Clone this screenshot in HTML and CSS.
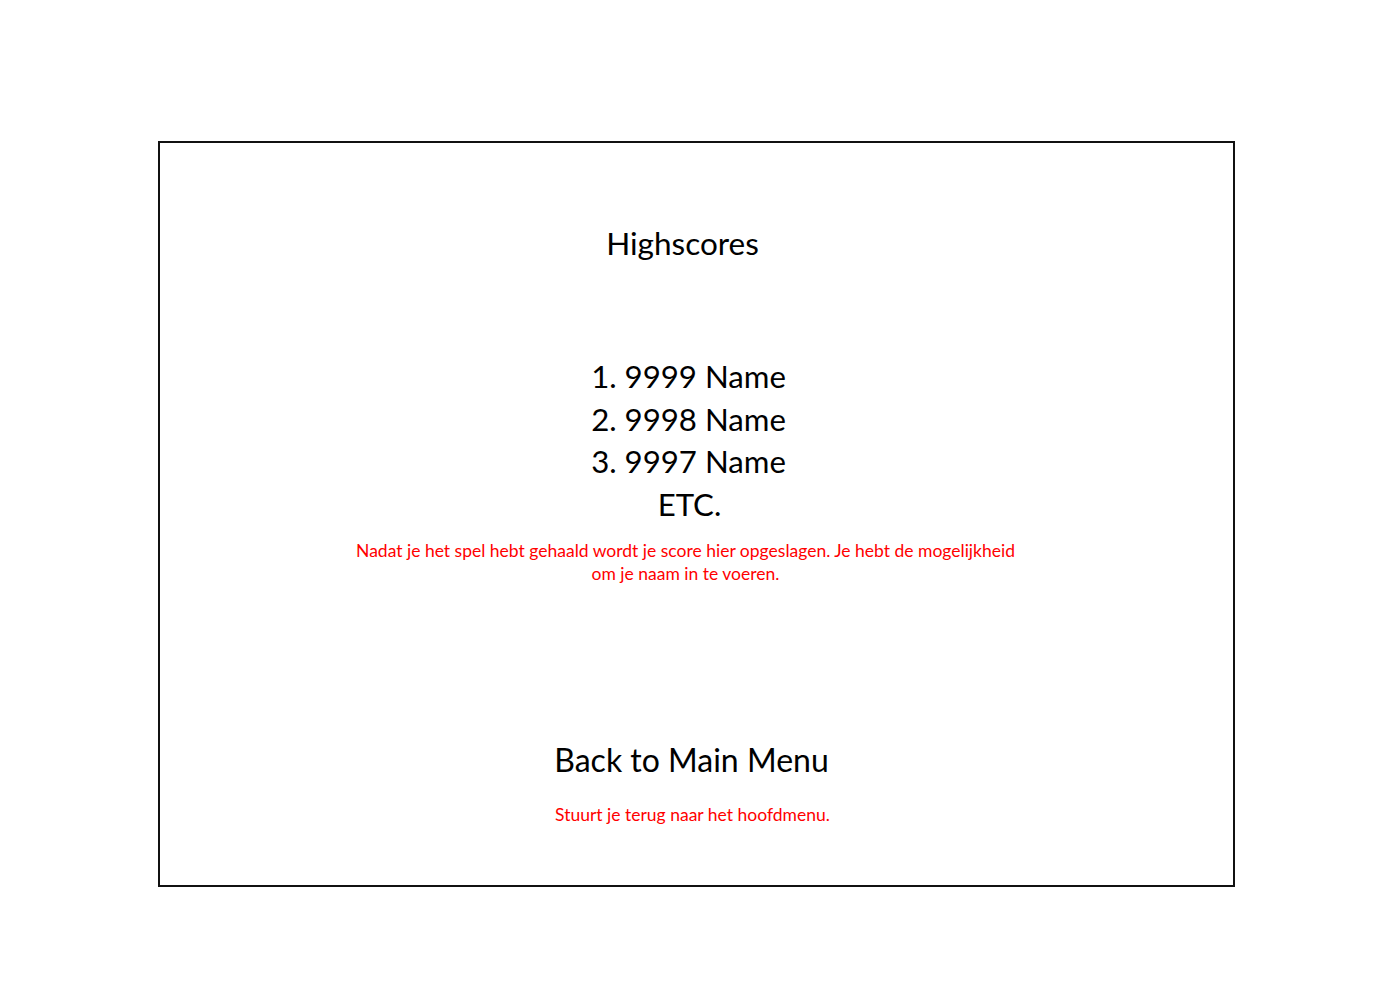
FILE: index.html
```html
<!DOCTYPE html>
<html>
<head>
<meta charset="utf-8">
<link rel="stylesheet" href="styles.css">
</head>
<body>
<div class="frame">
  <h1 class="title">Highscores</h1>
  <ol class="scores">
    <li>1. 9999 Name</li>
    <li>2. 9998 Name</li>
    <li>3. 9997 Name</li>
    <li class="etc">ETC.</li>
  </ol>
  <p class="note note-wide">Nadat je het spel hebt gehaald wordt je score hier opgeslagen. Je hebt de mogelijkheid<br>om je naam in te voeren.</p>
  <div class="back">Back to Main Menu</div>
  <p class="note note-back">Stuurt je terug naar het hoofdmenu.</p>
</div>
</body>
</html>
```

FILE: styles.css
```css
html, body {
  margin: 0;
  padding: 0;
  background: #fff;
}
body {
  font-family: Lato, "Open Sans", "Liberation Sans", sans-serif;
  color: #000;
}
.frame {
  box-sizing: border-box;
  margin: 141px 0 0 158px;
  width: 1077px;
  height: 746px;
  border: 2px solid #111;
  padding: 80px 16px 0 0;
  display: flex;
  flex-direction: column;
  align-items: center;
  text-align: center;
}
.title {
  margin: 0 12px 0 0;
  font-size: 31.5px;
  font-weight: normal;
  line-height: 40px;
}
.scores {
  list-style: none;
  margin: 92px 0 0 0;
  padding: 0;
  font-size: 31.2px;
  line-height: 42.5px;
}
.scores .etc {
  padding-left: 2px;
}
.note {
  margin: 0;
  color: #ff0000;
  font-size: 17.5px;
  line-height: 23px;
}
.note-wide {
  margin-top: 14px;
  margin-right: 6px;
}
.back {
  margin-top: 155px;
  font-size: 32px;
  line-height: 40px;
  margin-left: 6px;
}
.note-back {
  margin-top: 23px;
  margin-left: 8px;
}
```
